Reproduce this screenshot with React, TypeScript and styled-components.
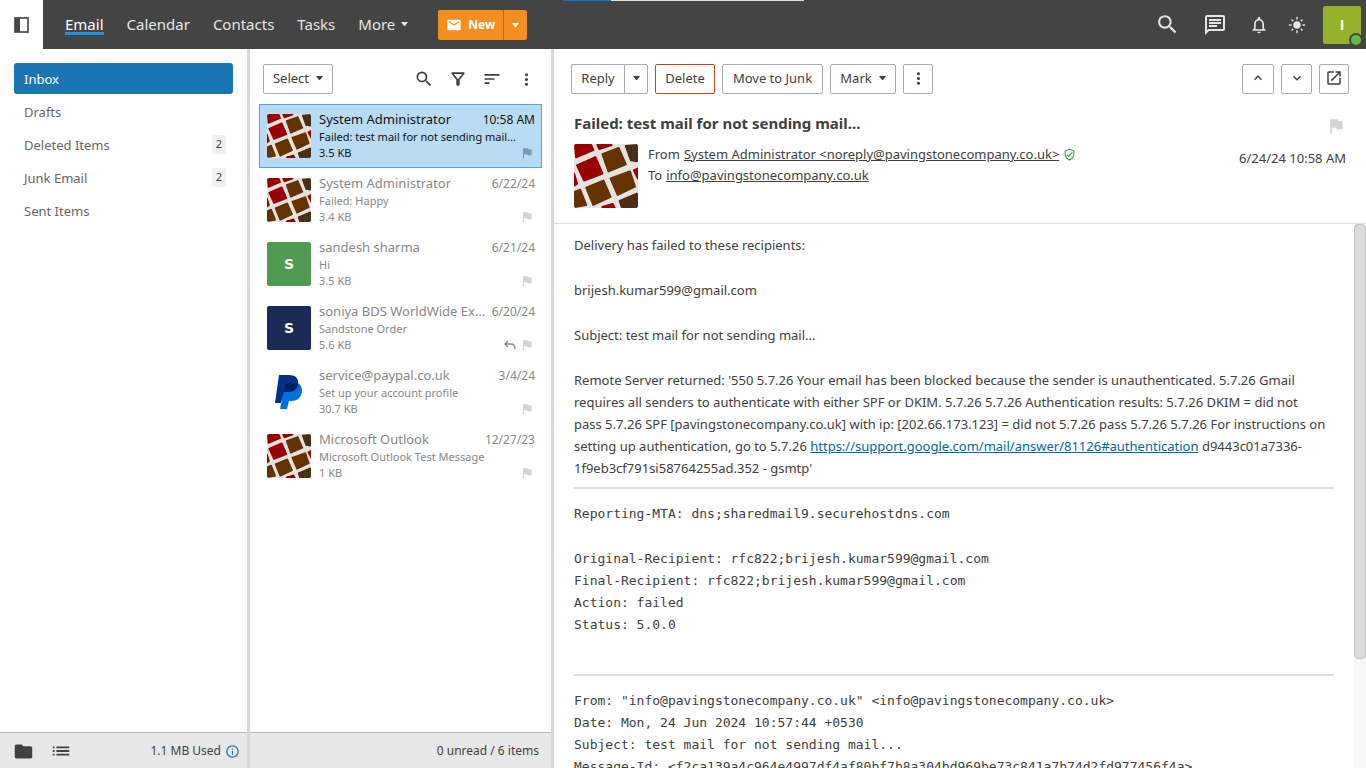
import React from "react";
import styled, { createGlobalStyle, css } from "styled-components";
import {
  MdSearch, MdOutlineChat, MdNotificationsNone, MdLightMode, MdEmail, MdOutlineFilterAlt,
  MdSort, MdMoreVert, MdFlag, MdOutlineVerifiedUser, MdFolder, MdList, MdInfoOutline,
  MdExpandLess, MdExpandMore, MdOpenInNew,
} from "react-icons/md";

const GlobalStyle = createGlobalStyle`
  *, *::before, *::after { box-sizing: border-box; }
  body {
    margin: 0;
    background: #fff;
    color: #404040;
    font-family: "Segoe UI", "Noto Sans", "Open Sans", sans-serif;
    font-size: 13px;
    line-height: 18px;
  }
  button { font: inherit; color: inherit; cursor: pointer; }
  ul, p, h1, pre { margin: 0; padding: 0; }
  ul { list-style: none; }
  svg { display: block; flex: none; }
`;

const Page = styled.div`
  display: flex;
  flex-direction: column;
  height: 100vh;
  overflow: hidden;
`;

const Header = styled.header`
  position: relative;
  display: flex;
  flex: none;
  height: 49px;
  background: #444;
  color: #e6e6e6;
`;

const LoadStrip = styled.div`
  position: absolute;
  top: 0;
  left: 41.2%;
  width: 241px;
  height: 1px;
  background: linear-gradient(to right, #0078d7 20%, #e0e0e0 20%);
`;

const PlainButton = styled.button`
  display: flex;
  align-items: center;
  justify-content: center;
  padding: 0;
  border: 0;
  background: none;
`;

const PaneToggle = styled(PlainButton)`
  width: 43px;
  background: #fff;
`;

const Nav = styled.nav`
  display: flex;
  align-items: center;
  gap: 23px;
  height: 48px;
  padding-left: 22px;
  font-size: 15px;
  line-height: 22px;
`;

const NavLink = styled.a<{ $active?: boolean }>`
  display: flex;
  align-items: center;
  gap: 6px;
  height: 22px;
  color: inherit;
  text-decoration: none;
  ${(p) => p.$active && css`color: #fff; box-shadow: inset 0 -3px #1f8fe0;`}
`;

const NewGroup = styled.div`
  display: flex;
  height: 30px;
  margin: 10px 0 0 30px;
  border-radius: 2px;
  background: #f28f20;
  color: #fff;
  font-size: 12px;
  font-weight: 700;
`;

const NewButton = styled(PlainButton)`
  gap: 6px;
  width: 65px;
`;

const NewCaret = styled(PlainButton)`
  width: 24px;
  border-left: 1px solid #bd6808;
`;

const HeaderTools = styled.div`
  display: flex;
  align-items: center;
  margin-left: auto;
  padding-right: 5px;
`;

const HeaderIcon = styled(PlainButton)<{ $width: number }>`
  width: ${(p) => p.$width}px;
  height: 48px;
`;

const Account = styled(PlainButton)`
  position: relative;
  width: 38px;
  height: 38px;
  margin-left: 7px;
  border-radius: 2px;
  background: #95b32a;
  color: #fff;
  font-family: "Open Sans", sans-serif;
  font-size: 14px;
  font-weight: 700;
`;

const Presence = styled.span`
  position: absolute;
  right: -2px;
  bottom: -3px;
  width: 14px;
  height: 14px;
  border: 2px solid #444;
  border-radius: 50%;
  background: #66bb44;
`;

const Main = styled.div`
  display: flex;
  flex: 1;
  min-height: 0;
`;

const Column = styled.section<{ $width: number }>`
  display: flex;
  flex: none;
  flex-direction: column;
  width: ${(p) => p.$width}px;
  border-right: 3px solid #d9d9d9;
`;

const Folders = styled.ul`
  flex: 1;
  padding: 14px 14px 0;
`;

const Folder = styled.a<{ $active?: boolean }>`
  display: flex;
  align-items: center;
  justify-content: space-between;
  height: 31px;
  margin-bottom: 2px;
  padding: 0 7px 0 10px;
  border-radius: 3px;
  color: #666;
  text-decoration: none;
  ${(p) => p.$active && css`background: #1976b2; color: #fff;`}
`;

const Count = styled.span`
  width: 14px;
  height: 19px;
  border-radius: 2px;
  background: #f1f1f1;
  color: #444;
  font-size: 11px;
  text-align: center;
`;

const StatusBar = styled.footer<{ $right: number }>`
  display: flex;
  flex: none;
  align-items: center;
  gap: 16px;
  height: 36px;
  padding: 1px ${(p) => p.$right}px 0 13px;
  border-top: 1px solid #b8bbb8;
  background: #e8e8e8;
  font-size: 12px;
`;

const StatusText = styled.span`
  display: flex;
  align-items: center;
  gap: 4px;
  margin-left: auto;
`;

const ListTools = styled.div`
  display: flex;
  align-items: center;
  padding: 15px 13px 9px;
`;

const Button = styled.button<{ $width: number; $danger?: boolean }>`
  display: flex;
  flex: none;
  align-items: center;
  justify-content: center;
  gap: 7px;
  width: ${(p) => p.$width}px;
  height: 30px;
  padding: 0 0 2px;
  border: 1px solid ${(p) => (p.$danger ? "#d0401a" : "#aaa")};
  border-radius: 2px;
  background: #fff;
  white-space: nowrap;
`;

const ToolIcons = styled.div`
  display: flex;
  margin-left: auto;
`;

const ToolIcon = styled(PlainButton)`
  width: 34px;
  height: 30px;

  &:last-child { margin-right: -5px; }
`;

const Messages = styled.ul`
  flex: 1;
  padding: 1px 9px 0;
`;

const Message = styled.li<{ $selected?: boolean }>`
  display: flex;
  gap: 8px;
  height: 64px;
  padding: 5px 6px 0 7px;
  border: 1px solid transparent;
  color: #888;
  ${(p) => p.$selected && css`border-color: #4aa8dc; background: #b9dcf5; color: #111;`}
`;

const Thumb = styled.div<{ $size: number; $color?: string }>`
  display: flex;
  flex: none;
  align-items: center;
  justify-content: center;
  width: ${(p) => p.$size}px;
  height: ${(p) => p.$size}px;
  overflow: hidden;
  border-radius: 2px;
  background: ${(p) => p.$color || "transparent"};
  color: #fff;
  font-family: "DejaVu Sans", sans-serif;
  font-size: 14px;
  font-weight: 700;
`;

const ThumbSlot = styled.div`
  padding-top: 4px;
`;

const Summary = styled.div`
  flex: 1;
  min-width: 0;
  font-size: 11px;
`;

const Line = styled.div<{ $height: number }>`
  display: flex;
  align-items: baseline;
  justify-content: space-between;
  gap: 6px;
  height: ${(p) => p.$height}px;
  line-height: ${(p) => p.$height}px;
  white-space: nowrap;
`;

const Sender = styled.span`
  overflow: hidden;
  font-size: 13px;
  text-overflow: ellipsis;
`;

const Received = styled.time`
  font-size: 12px;
`;

const Marks = styled.span<{ $selected?: boolean }>`
  display: flex;
  align-items: center;
  align-self: stretch;
  gap: 4px;
  padding-right: 1px;
  color: ${(p) => (p.$selected ? "#7d99ab" : "#d4d4d4")};
`;

const Reader = styled.main`
  display: flex;
  flex: 1;
  flex-direction: column;
  min-width: 0;
`;

const ReaderTools = styled.div`
  display: flex;
  gap: 7px;
  padding: 15px 17px 0;
`;

const Split = styled.div`
  display: flex;

  & > :first-child { border-right: 0; border-radius: 2px 0 0 2px; }
  & > :last-child { border-radius: 0 2px 2px 0; }
`;

const Spacer = styled.div`
  flex: 1;
`;

const MailHead = styled.div`
  display: flex;
  justify-content: space-between;
  padding: 19px 20px 15px;
  border-bottom: 1px solid #e0e0e0;
`;

const Subject = styled.h1`
  font-size: 15px;
  line-height: 20px;
`;

const Envelope = styled.div`
  display: flex;
  gap: 10px;
  padding-top: 11px;
  font-size: 13px;
  line-height: 21px;

  a { color: inherit; }
`;

const AddressLine = styled.div`
  display: flex;
  align-items: center;
  gap: 4px;
`;

const HeadAside = styled.div`
  display: flex;
  flex-direction: column;
  align-items: flex-end;
  gap: 13px;
  padding-top: 3px;
`;

const FlagButton = styled(PlainButton)`
  color: #d4d4d4;
`;

const BodyRow = styled.div`
  display: flex;
  flex: 1;
  min-height: 0;
`;

const MailBody = styled.article`
  flex: 1;
  min-width: 0;
  overflow: hidden;
  padding: 10px 20px 0;
  font-size: 13px;
  line-height: 22px;

  p, pre { margin-bottom: 23px; }
  p:last-of-type { margin-bottom: 0; }
  a { color: #006a9e; }
  pre { font-family: Consolas, "DejaVu Sans Mono", monospace; font-size: 13px; }
`;

const Rule = styled.hr<{ $above: number }>`
  height: 2px;
  margin: ${(p) => p.$above}px 0 14px;
  border: 0;
  background: #dedede;
`;

const Track = styled.div`
  flex: none;
  width: 12px;
  background: #f8f8f8;
`;

const Handle = styled.div`
  height: 80%;
  border: 1px solid #c4c4c4;
  border-radius: 4px;
  background: #dcdcdc;
`;

const Caret = () => (
  <svg width="7" height="4" viewBox="0 0 7 4" fill="currentColor" aria-hidden="true">
    <path d="M0 0H7L4 4H3Z" />
  </svg>
);

const Paving = () => (
  <svg width="100%" height="100%" viewBox="0 0 63 63" aria-hidden="true">
    <rect width="63" height="63" fill="#e6e2e0" />
    <g strokeWidth="2" strokeLinejoin="round">
      <g fill="#990000" stroke="#990000">
        <path d="M1 1H17L19 6L2 13Z" />
        <path d="M23 1H37L25 5Z" />
        <path d="M3 21L21 13L28 29L10 36Z" />
        <path d="M59 26L63 24V34Z" />
        <path d="M0 29L3 39L0 41Z" />
        <path d="M28 62L38 59L40 63Z" />
      </g>
      <g fill="#663300" stroke="#663300">
        <path d="M28 10L44 4L51 20L34 27Z" />
        <path d="M36 34L55 27L60 42L43 50Z" />
        <path d="M12 43L29 36L36 52L19 60Z" />
        <path d="M1 47L6 45L12 60L1 62Z" />
      </g>
      <g fill="#4a2e16" stroke="#4a2e16">
        <path d="M51 2L62 1V17L56 16Z" />
        <path d="M45 56L62 49V62H47Z" />
      </g>
    </g>
  </svg>
);

const PayPal = () => (
  <svg width="44" height="44" viewBox="0 0 44 44" aria-hidden="true">
    <path d="M17 13H31C36 16 36 23 33 27C31 30 27 31 24 31H22L20 39H13L15 30Z" fill="#0070e0" />
    <path d="M12 5H22C29 5 32 9 31 14C30 20 26 22 21 22H17L14 33H8Z" fill="#003087" />
    <path d="M18 16C19 13 21 13 23 13H31C31 19 26 22 21 22H17Z" fill="#001c64" />
  </svg>
);

const ReplyArrow = () => (
  <svg width="12" height="12" viewBox="0 0 12 12" fill="none" stroke="#888" strokeWidth="1.300" aria-label="Replied">
    <path d="M4 2L1 5L4 8M1 5H7C9.500 5 11 6.500 11 10" />
  </svg>
);

const PaneIcon = () => (
  <svg width="16" height="16" viewBox="0 0 16 16" aria-hidden="true">
    <path d="M1 1H14V15H1Z" fill="#fff" stroke="#666" strokeWidth="2" />
    <path d="M1 1H6V15H1Z" fill="#444" />
  </svg>
);

type Mail = { from: string; date: string; subject: string; size: string; icon: "paving" | "paypal" | "letter"; color?: string; replied?: boolean };

const mails: Mail[] = [
  { from: "System Administrator", date: "10:58 AM", subject: "Failed: test mail for not sending mail...", size: "3.5 KB", icon: "paving" },
  { from: "System Administrator", date: "6/22/24", subject: "Failed: Happy", size: "3.4 KB", icon: "paving" },
  { from: "sandesh sharma", date: "6/21/24", subject: "Hi", size: "3.5 KB", icon: "letter", color: "#519a51" },
  { from: "soniya BDS WorldWide Export", date: "6/20/24", subject: "Sandstone Order", size: "5.6 KB", icon: "letter", color: "#192a56", replied: true },
  { from: "service@paypal.co.uk", date: "3/4/24", subject: "Set up your account profile", size: "30.7 KB", icon: "paypal" },
  { from: "Microsoft Outlook", date: "12/27/23", subject: "Microsoft Outlook Test Message", size: "1 KB", icon: "paving" },
];

const folders = [
  { name: "Inbox" },
  { name: "Drafts" },
  { name: "Deleted Items", count: 2 },
  { name: "Junk Email", count: 2 },
  { name: "Sent Items" },
];

export default function App() {
  return (
    <Page>
      <GlobalStyle />
      <Header>
        <LoadStrip />
        <PaneToggle aria-label="Toggle folder pane"><PaneIcon /></PaneToggle>
        <Nav>
          <NavLink href="#email" $active>Email</NavLink>
          <NavLink href="#calendar">Calendar</NavLink>
          <NavLink href="#contacts">Contacts</NavLink>
          <NavLink href="#tasks">Tasks</NavLink>
          <NavLink href="#more">More <Caret /></NavLink>
        </Nav>
        <NewGroup>
          <NewButton><MdEmail size={16} />New</NewButton>
          <NewCaret aria-label="New item options"><Caret /></NewCaret>
        </NewGroup>
        <HeaderTools>
          <HeaderIcon $width={48} aria-label="Search"><MdSearch size={25} /></HeaderIcon>
          <HeaderIcon $width={48} aria-label="Chat"><MdOutlineChat size={24} /></HeaderIcon>
          <HeaderIcon $width={39} aria-label="Notifications"><MdNotificationsNone size={20} /></HeaderIcon>
          <HeaderIcon $width={38} aria-label="Theme"><MdLightMode size={18} /></HeaderIcon>
          <Account aria-label="Account">I<Presence /></Account>
        </HeaderTools>
      </Header>
      <Main>
        <Column $width={250}>
          <Folders>
            {folders.map((f, i) => (
              <li key={f.name}>
                <Folder href={"#" + f.name} $active={i === 0}>
                  {f.name}
                  {f.count && <Count>{f.count}</Count>}
                </Folder>
              </li>
            ))}
          </Folders>
          <StatusBar $right={7}>
            <PlainButton aria-label="Folder view"><MdFolder size={21} /></PlainButton>
            <PlainButton aria-label="List view"><MdList size={22} /></PlainButton>
            <StatusText>1.1 MB Used <MdInfoOutline size={15} color="#1976a8" /></StatusText>
          </StatusBar>
        </Column>
        <Column $width={304}>
          <ListTools>
            <Button $width={70}>Select <Caret /></Button>
            <ToolIcons>
              <ToolIcon aria-label="Search mail"><MdSearch size={20} /></ToolIcon>
              <ToolIcon aria-label="Filter"><MdOutlineFilterAlt size={20} /></ToolIcon>
              <ToolIcon aria-label="Sort"><MdSort size={20} /></ToolIcon>
              <ToolIcon aria-label="More list actions"><MdMoreVert size={19} /></ToolIcon>
            </ToolIcons>
          </ListTools>
          <Messages>
            {mails.map((m, i) => (
              <Message key={i} $selected={i === 0}>
                <ThumbSlot>
                  <Thumb $size={44} $color={m.color}>
                    {m.icon === "paving" ? <Paving /> : m.icon === "paypal" ? <PayPal /> : "S"}
                  </Thumb>
                </ThumbSlot>
                <Summary>
                  <Line $height={18}><Sender>{m.from}</Sender><Received>{m.date}</Received></Line>
                  <Line $height={18}>{m.subject}</Line>
                  <Line $height={14}>
                    {m.size}
                    <Marks $selected={i === 0}>{m.replied && <ReplyArrow />}<MdFlag size={14} /></Marks>
                  </Line>
                </Summary>
              </Message>
            ))}
          </Messages>
          <StatusBar $right={12}><StatusText>0 unread / 6 items</StatusText></StatusBar>
        </Column>
        <Reader>
          <ReaderTools>
            <Split>
              <Button $width={53}>Reply</Button>
              <Button $width={24} aria-label="Reply options"><Caret /></Button>
            </Split>
            <Button $width={60} $danger>Delete</Button>
            <Button $width={101}>Move to Junk</Button>
            <Button $width={66}>Mark <Caret /></Button>
            <Button $width={30} aria-label="More actions"><MdMoreVert size={19} /></Button>
            <Spacer />
            <Button $width={32} aria-label="Previous message"><MdExpandLess size={16} /></Button>
            <Button $width={31} aria-label="Next message"><MdExpandMore size={16} /></Button>
            <Button $width={30} aria-label="Open in new window"><MdOpenInNew size={18} /></Button>
          </ReaderTools>
          <MailHead>
            <div>
              <Subject>Failed: test mail for not sending mail...</Subject>
              <Envelope>
                <Thumb $size={64}><Paving /></Thumb>
                <div>
                  <AddressLine>
                    From <a href="mailto:noreply@pavingstonecompany.co.uk">System Administrator &lt;noreply@pavingstonecompany.co.uk&gt;</a>
                    <MdOutlineVerifiedUser size={13} color="#3aa53a" />
                  </AddressLine>
                  <AddressLine>
                    To <a href="mailto:info@pavingstonecompany.co.uk">info@pavingstonecompany.co.uk</a>
                  </AddressLine>
                </div>
              </Envelope>
            </div>
            <HeadAside>
              <FlagButton aria-label="Flag message"><MdFlag size={20} /></FlagButton>
              <time>6/24/24 10:58 AM</time>
            </HeadAside>
          </MailHead>
          <BodyRow>
            <MailBody>
              <p>Delivery has failed to these recipients:</p>
              <p>brijesh.kumar599@gmail.com</p>
              <p>Subject: test mail for not sending mail...</p>
              <p>
                Remote Server returned: '550 5.7.26 Your email has been blocked because the sender is unauthenticated. 5.7.26 Gmail
                requires all senders to authenticate with either SPF or DKIM. 5.7.26 5.7.26 Authentication results: 5.7.26 DKIM = did not
                <br />
                pass 5.7.26 SPF [pavingstonecompany.co.uk] with ip: [202.66.173.123] = did not 5.7.26 pass 5.7.26 5.7.26 For instructions on
                setting up authentication, go to 5.7.26{" "}
                <a href="https://support.google.com/mail/answer/81126#authentication">https://support.google.com/mail/answer/81126#authentication</a>{" "}
                d9443c01a7336-1f9eb3cf791si58764255ad.352 - gsmtp'
              </p>
              <Rule $above={8} />
              <pre>Reporting-MTA: dns;sharedmail9.securehostdns.com</pre>
              <pre>{`Original-Recipient: rfc822;brijesh.kumar599@gmail.com
Final-Recipient: rfc822;brijesh.kumar599@gmail.com
Action: failed
Status: 5.0.0`}</pre>
              <Rule $above={38} />
              <pre>{`From: "info@pavingstonecompany.co.uk" <info@pavingstonecompany.co.uk>
Date: Mon, 24 Jun 2024 10:57:44 +0530
Subject: test mail for not sending mail...
Message-Id: <f2ca139a4c964e4997df4af80bf7b8a304bd969be73c841a7b74d2fd977456f4a>`}</pre>
            </MailBody>
            <Track><Handle /></Track>
          </BodyRow>
        </Reader>
      </Main>
    </Page>
  );
}
